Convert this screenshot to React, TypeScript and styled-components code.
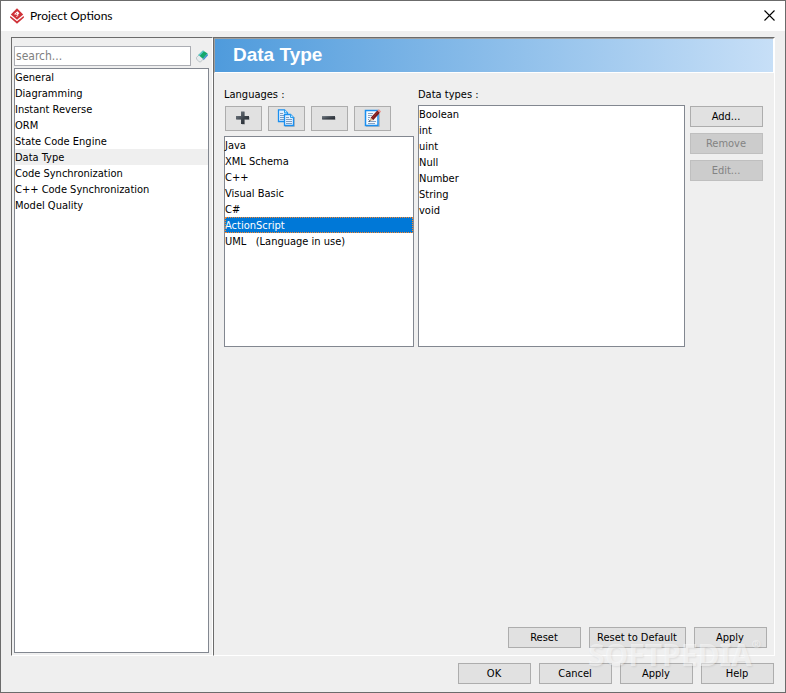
import React, { useState } from "react";
import styled, { createGlobalStyle } from "styled-components";

const Global = createGlobalStyle`
  *, *::before, *::after { box-sizing: border-box; }
  body { margin: 0; }
  body, button, input { font-family: Tahoma, "DejaVu Sans Condensed", "Noto Sans", sans-serif; font-size: 11px; color: #000; }
`;

const Window = styled.div`
  position: relative;
  display: flex;
  flex-direction: column;
  min-height: 100vh;
  background: #efefef;
  border: 1px solid #6b6b6b;
`;

const TitleBar = styled.header`
  display: flex;
  align-items: center;
  gap: 5px;
  height: 30px;
  padding: 0 10px 0 8px;
  background: #fff;
`;

const WindowTitle = styled.h1`
  flex: 1;
  margin: 0;
  font-family: "Segoe UI", Lato, sans-serif;
  font-size: 12px;
  line-height: 16px;
  font-weight: 400;
`;

const CloseButton = styled.button`
  display: flex;
  padding: 0 0 2px;
  border: 0;
  background: none;
`;

const Body = styled.div`
  flex: 1;
  display: grid;
  grid-template-columns: 202px 1fr;
  padding: 6px 10px 0;
`;

const Sunken = styled.div`
  display: flex;
  flex-direction: column;
  border: 1px solid #6b6b6b;
  border-right-color: #fff;
  border-bottom-color: #fff;
`;

const Sidebar = styled(Sunken)`
  padding: 8px 3px 2px 2px;
  gap: 2px;
`;

const SearchRow = styled.form`
  display: flex;
  align-items: center;
  gap: 4px;
`;

const SearchInput = styled.input`
  flex: 1;
  min-width: 0;
  height: 20px;
  padding: 0 1px;
  border: 1px solid #abadb3;
  border-radius: 0;
  background: #fff;
  outline: 0;
  font-size: 12px;
  &::placeholder { color: #808080; opacity: 1; }
`;

const ClearButton = styled.button`
  display: flex;
  padding: 0;
  border: 0;
  background: none;
`;

const ListBox = styled.div<{ $grow?: boolean }>`
  display: flex;
  flex-direction: column;
  flex: ${(p) => (p.$grow ? "1" : "none")};
  min-width: 0;
  background: #fff;
  border: 1px solid #828790;
`;

const LanguageList = styled(ListBox)`
  height: 211px;
`;

const TypeList = styled(ListBox)`
  height: 242px;
`;

const Item = styled.button<{ $tone?: "soft" | "strong" }>`
  height: 16px;
  padding: 2px 0 0;
  border: 0;
  text-align: left;
  line-height: 14px;
  white-space: pre;
  background: ${(p) => (p.$tone === "strong" ? "#0078d7" : p.$tone === "soft" ? "#efefef" : "transparent")};
  color: ${(p) => (p.$tone === "strong" ? "#fff" : "#000")};
  outline: ${(p) => (p.$tone === "strong" ? "1px dotted #ff8728" : "0")};
  outline-offset: -1px;
`;

const Banner = styled.h2`
  margin: 0;
  height: 35px;
  padding-left: 18px;
  border: 1px solid #a0a0a0;
  border-right-color: #fff;
  border-bottom-color: #fff;
  background: linear-gradient(90deg, #4f9bdc, #c7dff7) padding-box;
  color: #fff;
  font: bold 19px/32px "Liberation Sans", Arial, sans-serif;
`;

const Editor = styled.div`
  flex: 1;
  display: grid;
  grid-template-columns: 190px 1fr 74px;
  align-items: start;
  gap: 4px;
  padding: 13px 11px 0 10px;
`;

const Column = styled.section`
  display: flex;
  flex-direction: column;
`;

const Label = styled.span`
  height: 19px;
  line-height: 18px;
`;

const ToolRow = styled.div`
  display: flex;
  gap: 6px;
  padding: 1px 1px 5px;
`;

const ToolButton = styled.button`
  display: flex;
  align-items: center;
  justify-content: center;
  width: 37px;
  height: 25px;
  padding: 0 2px 1px 0;
  border: 1px solid #adadad;
  background: #e1e1e1;
`;

const ActionColumn = styled.div`
  display: flex;
  flex-direction: column;
  gap: 6px;
  padding: 20px 0 0 1px;
`;

const PushButton = styled.button`
  min-width: 73px;
  height: 21px;
  padding: 1px 8px 0 7px;
  border: 1px solid #adadad;
  background: #e1e1e1;
  line-height: 16px;
  white-space: nowrap;
  &:disabled { background: #cccccc; border-color: #bfbfbf; color: #838383; }
`;

const PanelActions = styled.div`
  display: flex;
  justify-content: flex-end;
  gap: 8px;
  padding: 0 7px 7px;
`;

const Footer = styled.footer`
  display: flex;
  justify-content: flex-end;
  gap: 8px;
  padding: 7px 11px 8px;
`;

const Watermark = styled.div`
  position: absolute;
  right: 24px;
  bottom: 20px;
  display: flex;
  align-items: flex-start;
  pointer-events: none;
  color: rgba(255, 255, 255, 0.5);
  text-shadow: 1px 1px 2px rgba(0, 0, 0, 0.08);
  font: bold 30px/34px "Noto Sans", sans-serif;
`;

const Registered = styled.span`
  font-size: 11px;
  line-height: 12px;
`;

const Logo = () => (
  <svg width="16" height="16" viewBox="0 0 16 16" aria-hidden="true">
    <path d="M8 .3 14.2 6.4 8 11.8 1.8 6.4Z" fill="#cf3238" />
    <path d="M1.4 8 8 13.2 14.6 8 15 9.6 8 15.8 1 9.6Z" fill="#cf3238" />
    <path d="M5.2 6 8.3 3.2 10.4 5.2 8 7.4 7.1 6.6 8.2 5.5 7.6 5 6.2 6.9Z" fill="#fff" />
    <path d="M7.4 8.6 9.4 7.2" stroke="#fff" strokeWidth=".9" />
  </svg>
);

const Close = () => (
  <svg width="11" height="11" viewBox="0 0 11 11" aria-hidden="true">
    <path d="M.5.5 10.5 10.5M10.5.5.5 10.5" stroke="#000" strokeWidth="1.1" />
  </svg>
);

const Eraser = () => (
  <svg width="14" height="14" viewBox="0 0 14 14" aria-hidden="true">
    <path d="M1.5 8.4 4.3 5.6 8.3 10 5.5 13 4.1 12.8 1.5 10Z" fill="#e7ecee" stroke="#a9b3b8" strokeWidth=".7" />
    <path d="M3.4 6.1 8 1.6 12.6 4.6 8 9.8Z" fill="#12a86c" />
    <path d="M3.4 6.1 8 1.6 9 2.3 4.6 7Z" fill="#62c9d2" />
    <path d="M8 9.8 12.6 4.6 12.8 6.4 8.6 11.2Z" fill="#3d8fd0" />
  </svg>
);

const MetalGradient = ({ id }: { id: string }) => (
  <defs>
    <linearGradient id={id} x1="0" y1="0" x2="1" y2="1">
      <stop offset="0" stopColor="#7b838b" />
      <stop offset=".55" stopColor="#3d444c" />
      <stop offset="1" stopColor="#20252b" />
    </linearGradient>
  </defs>
);

const Plus = () => (
  <svg width="16" height="16" viewBox="0 0 16 16" aria-hidden="true">
    <MetalGradient id="plusMetal" />
    <path d="M7 2H10V7H15V10H10V15H7V10H2V7H7Z" fill="#c2c4c6" />
    <path d="M6 1.5H9.5V6H14V9.5H9.5V14H6V9.5H1V6H6Z" fill="url(#plusMetal)" />
  </svg>
);

const Minus = () => (
  <svg width="16" height="16" viewBox="0 0 16 16" aria-hidden="true">
    <MetalGradient id="minusMetal" />
    <path d="M2 7H15V10H2Z" fill="#c2c4c6" />
    <path d="M1 6H14V9.5H1Z" fill="url(#minusMetal)" />
  </svg>
);

const CopyPages = () => (
  <svg width="18" height="18" viewBox="0 0 18 18" aria-hidden="true">
    <path d="M1.5.8H7.5L10.5 3.8V12.5H1.5Z" fill="#e4f1ff" stroke="#1a8ff0" strokeWidth="1.3" />
    <path d="M7.5.8V3.8H10.5" fill="#c5e3ff" stroke="#28a0ed" />
    <path d="M3 4.5H6M3 6.5H9M3 8.5H9M3 10.5H9" stroke="#7c9cc0" />
    <path d="M8 17.5H17.5V8" stroke="#b9b9b9" fill="none" />
    <path d="M7.5 5.5H13.5L16.5 8.5V16.5H7.5Z" fill="#e4f1ff" stroke="#1a8ff0" strokeWidth="1.3" />
    <path d="M13.5 5.5V8.5H16.5" fill="#c5e3ff" stroke="#28a0ed" />
    <path d="M9 8.5H12M9 10.5H15M9 12.5H15M9 14.5H15" stroke="#7c9cc0" />
  </svg>
);

const EditPage = () => (
  <svg width="18" height="18" viewBox="0 0 18 18" aria-hidden="true">
    <path d="M3 17.5H16.5V5" stroke="#b4b9be" fill="none" />
    <path d="M2.5 1.5H15V16.5H2.5Z" fill="#f5faff" stroke="#1a8ff0" strokeWidth="1.5" />
    <path d="M5 4.5H10M5 6.5H9M5 8.5H7M5 10.5H6M5 12.5H13M5 14.5H12" stroke="#86a2c2" />
    <path d="M7.6 8.8 14.3 1.6 17 3.8 10.2 11.2Z" fill="#7d1c1c" />
    <path d="M9.2 9.2 15.3 2.4" stroke="#a03a36" strokeWidth=".7" />
    <path d="M6.3 12 7.6 8.8 10.2 11.2Z" fill="#e0bd95" />
    <path d="M14.3 1.6 16 .3 18 2.4 17 3.8Z" fill="#ea8f88" />
    <path d="M6 12.3 7.3 11.6" stroke="#222" />
  </svg>
);

const sections = [
  "General", "Diagramming", "Instant Reverse", "ORM", "State Code Engine",
  "Data Type", "Code Synchronization", "C++ Code Synchronization", "Model Quality",
];
const languages = ["Java", "XML Schema", "C++", "Visual Basic", "C#", "ActionScript", "UML   (Language in use)"];
const dataTypes = ["Boolean", "int", "uint", "Null", "Number", "String", "void"];

export default function App() {
  const [query, setQuery] = useState("");
  const [section, setSection] = useState("Data Type");
  const [language, setLanguage] = useState("ActionScript");

  return (
    <Window>
      <Global />
      <TitleBar>
        <Logo />
        <WindowTitle>Project Options</WindowTitle>
        <CloseButton type="button" aria-label="Close"><Close /></CloseButton>
      </TitleBar>
      <Body>
        <Sidebar>
          <SearchRow onSubmit={(e) => e.preventDefault()}>
            <SearchInput aria-label="Search" placeholder="search..." value={query} onChange={(e) => setQuery(e.target.value)} />
            <ClearButton type="button" aria-label="Clear search" onClick={() => setQuery("")}><Eraser /></ClearButton>
          </SearchRow>
          <ListBox $grow role="listbox" aria-label="Sections">
            {sections.map((name) => (
              <Item key={name} type="button" role="option" aria-selected={name === section}
                $tone={name === section ? "soft" : undefined} onClick={() => setSection(name)}>{name}</Item>
            ))}
          </ListBox>
        </Sidebar>
        <Sunken>
          <Banner>Data Type</Banner>
          <Editor>
            <Column>
              <Label id="languages">Languages :</Label>
              <ToolRow>
                <ToolButton type="button" aria-label="Add language"><Plus /></ToolButton>
                <ToolButton type="button" aria-label="Copy language"><CopyPages /></ToolButton>
                <ToolButton type="button" aria-label="Remove language"><Minus /></ToolButton>
                <ToolButton type="button" aria-label="Edit language"><EditPage /></ToolButton>
              </ToolRow>
              <LanguageList role="listbox" aria-labelledby="languages">
                {languages.map((name) => (
                  <Item key={name} type="button" role="option" aria-selected={name === language}
                    $tone={name === language ? "strong" : undefined} onClick={() => setLanguage(name)}>{name}</Item>
                ))}
              </LanguageList>
            </Column>
            <Column>
              <Label id="types">Data types :</Label>
              <TypeList role="listbox" aria-labelledby="types">
                {dataTypes.map((name) => (
                  <Item key={name} type="button" role="option" aria-selected={false}>{name}</Item>
                ))}
              </TypeList>
            </Column>
            <ActionColumn>
              <PushButton type="button">Add...</PushButton>
              <PushButton type="button" disabled>Remove</PushButton>
              <PushButton type="button" disabled>Edit...</PushButton>
            </ActionColumn>
          </Editor>
          <PanelActions>
            <PushButton type="button">Reset</PushButton>
            <PushButton type="button">Reset to Default</PushButton>
            <PushButton type="button">Apply</PushButton>
          </PanelActions>
        </Sunken>
      </Body>
      <Footer>
        <PushButton type="button">OK</PushButton>
        <PushButton type="button">Cancel</PushButton>
        <PushButton type="button">Apply</PushButton>
        <PushButton type="button">Help</PushButton>
      </Footer>
      <Watermark aria-hidden="true">SOFTPEDIA<Registered>®</Registered></Watermark>
    </Window>
  );
}
